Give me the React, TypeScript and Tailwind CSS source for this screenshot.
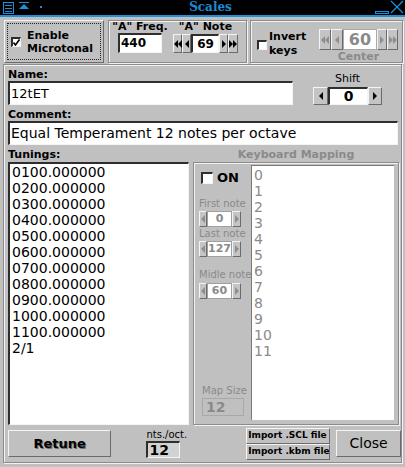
import React from 'react';

const raised = 'border border-t-[#f4f4f4] border-l-[#f4f4f4] border-b-[#6b6b6b] border-r-[#6b6b6b]';
const sunken =
  'border-t-2 border-l-2 border-b border-r border-t-[#2e2e2e] border-l-[#2e2e2e] border-b-[#f4f4f4] border-r-[#f4f4f4]';
const groove = 'border border-[#8b8b8b] shadow-[inset_1px_1px_0_#f2f2f2,1px_1px_0_#f2f2f2]';
const dimText = 'text-[#8a8a8a]';

function Tri({ left, color }: { left: boolean; color: string }) {
  return (
    <svg width="4" height="8" viewBox="0 0 4 8" className="shrink-0">
      <path d={left ? 'M4 0L0 4L4 8Z' : 'M0 0L4 4L0 8Z'} fill={color} />
    </svg>
  );
}

function Arrow({
  left = false,
  double = false,
  dim = false,
  className = '',
}: {
  left?: boolean;
  double?: boolean;
  dim?: boolean;
  className?: string;
}) {
  const c = dim ? '#8e8e8e' : '#000';
  return (
    <div className={`flex items-center justify-center bg-[#c4c4c4] ${raised} ${className}`}>
      {double && left && <Tri left color={c} />}
      <Tri left={left} color={c} />
      {double && !left && <Tri left={false} color={c} />}
    </div>
  );
}

function Check({ on = false, box }: { on?: boolean; box: string }) {
  return (
    <div className={`bg-white ${sunken} ${box} flex items-center justify-center shrink-0`}>
      {on && (
        <svg width="7" height="7" viewBox="0 0 7 7">
          <path d="M0.5 3.5L2.5 6L6.5 0.5" stroke="#000" strokeWidth="1.6" fill="none" />
        </svg>
      )}
    </div>
  );
}

function SmallCounter({ value }: { value: string }) {
  return (
    <div className="flex h-[16px] ml-[5px]">
      <Arrow left dim className="w-[8px]" />
      <div
        className={`w-[25px] bg-white border border-[#a0a0a0] flex items-center justify-center text-[11px] font-bold ${dimText}`}
      >
        {value}
      </div>
      <Arrow dim className="w-[9px]" />
    </div>
  );
}

function TitleBar() {
  const blue = '#1e8fdc';
  return (
    <div className="flex h-[17px] bg-black border-b-2 border-[#1e8fdc]">
      <svg width="48" height="15" className="shrink-0">
        <rect x="3.5" y="2.5" width="10" height="11" fill="none" stroke={blue} />
        <line x1="5" y1="5.5" x2="12" y2="5.5" stroke={blue} />
        <line x1="5" y1="8.5" x2="12" y2="8.5" stroke={blue} />
        <line x1="5" y1="11.5" x2="12" y2="11.5" stroke={blue} />
        <rect x="19" y="2" width="10" height="1" fill={blue} />
        <path d="M19 9L24 4L29 9Z" fill={blue} />
        <rect x="40" y="6" width="2" height="2" fill={blue} />
      </svg>
      <div className="flex-1 text-center font-['DejaVu_Serif',serif] font-bold text-[12px] leading-[15px] text-[#1a8ad4]">
        Scales
      </div>
      <svg width="32" height="15" className="shrink-0">
        <rect x="2.5" y="11.5" width="13" height="2" fill="none" stroke={blue} />
        <line x1="18" y1="1" x2="30" y2="13" stroke={blue} strokeWidth="1.2" />
        <line x1="30" y1="1" x2="18" y2="13" stroke={blue} strokeWidth="1.2" />
      </svg>
    </div>
  );
}

export default function App() {
  const tunings = [
    '0100.000000',
    '0200.000000',
    '0300.000000',
    '0400.000000',
    '0500.000000',
    '0600.000000',
    '0700.000000',
    '0800.000000',
    '0900.000000',
    '1000.000000',
    '1100.000000',
    '2/1',
  ];
  const keys = Array.from({ length: 12 }, (_, i) => String(i));

  return (
    <div className="w-[405px] h-[467px] overflow-hidden bg-[#c0c0c0] text-black font-['DejaVu_Sans',sans-serif]">
      <TitleBar />

      {/* top controls */}
      <div className="flex items-start h-[47px] pt-[3px]">
        <div className={`ml-[4px] w-[100px] h-[43px] p-[2px] ${raised}`}>
          <div className="h-full border border-dotted border-[#222] flex items-center pl-[3px] gap-[6px]">
            <Check on box="w-[10px] h-[10px]" />
            <div className="text-[11px] font-bold leading-[13px]">
              Enable
              <br />
              Microtonal
            </div>
          </div>
        </div>

        <div className={`ml-[4px] w-[139px] h-[43px] ${groove} flex pl-[9px] gap-[11px]`}>
          <div className="w-[44px] flex flex-col items-center">
            <div className="text-[11px] font-bold leading-[12px] whitespace-nowrap">"A" Freq.</div>
            <div className={`w-[44px] h-[20px] bg-white ${sunken} text-[12px] font-bold leading-[17px] pl-[1px]`}>
              440
            </div>
          </div>
          <div className="w-[65px] flex flex-col items-center">
            <div className="text-[11px] font-bold leading-[12px] whitespace-nowrap">"A" Note</div>
            <div className="flex h-[19px] mt-[1px]">
              <Arrow left double className="w-[9px]" />
              <Arrow left className="w-[9px]" />
              <div className={`w-[28px] bg-white ${sunken} flex items-center justify-center text-[12px] font-bold`}>
                69
              </div>
              <Arrow className="w-[9px]" />
              <Arrow double className="w-[10px]" />
            </div>
          </div>
        </div>

        <div className={`ml-[3px] w-[153px] h-[43px] ${groove} flex items-start`}>
          <div className="mt-[19px] ml-[6px]">
            <Check box="w-[10px] h-[10px]" />
          </div>
          <div className="ml-[2px] mt-[9px] text-[11px] font-bold leading-[14px]">
            Invert
            <br />
            keys
          </div>
          <div className="ml-auto mr-[4px] mt-[8px] flex flex-col items-center">
            <div className="flex h-[21px]">
              <Arrow left double dim className="w-[12px]" />
              <Arrow left dim className="w-[12px]" />
              <div
                className={`w-[34px] bg-white border border-[#a8a8a8] flex items-center justify-center text-[16px] font-bold ${dimText}`}
              >
                60
              </div>
              <Arrow dim className="w-[10px]" />
              <Arrow double dim className="w-[11px]" />
            </div>
            <div className={`mt-[1px] text-[11px] font-bold leading-[12px] ${dimText}`}>Center</div>
          </div>
        </div>
      </div>

      {/* main panel */}
      <div className={`mx-[3px] h-[399px] ${groove} pl-[4px] pt-[3px]`}>
        <div className="flex">
          <div className="w-[285px]">
            <div className="text-[11px] font-bold leading-[13px]">Name:</div>
            <div className={`h-[24px] bg-white ${sunken} text-[13px] leading-[21px] pl-[1px]`}>12tET</div>
          </div>
          <div className="ml-[20px] pt-[4px] flex flex-col items-center">
            <div className="text-[11px] leading-[14px]">Shift</div>
            <div className="flex h-[18px] mt-[1px]">
              <Arrow left className="w-[15px]" />
              <div className={`w-[40px] bg-white ${sunken} flex items-center justify-center text-[14px] font-bold`}>
                0
              </div>
              <Arrow className="w-[14px]" />
            </div>
          </div>
        </div>

        <div className="mt-[3px] text-[11px] font-bold leading-[13px]">Comment:</div>
        <div className={`w-[390px] h-[24px] bg-white ${sunken} text-[14px] leading-[21px] pl-[1px] whitespace-nowrap`}>
          Equal Temperament 12 notes per octave
        </div>

        <div className="mt-[3px] flex h-[14px] text-[11px] font-bold leading-[14px]">
          <div className="w-[185px]">Tunings:</div>
          <div className={`w-[206px] text-center ${dimText}`}>Keyboard Mapping</div>
        </div>

        <div className="flex h-[263px] gap-[4px]">
          <div className={`w-[181px] bg-white ${sunken} pl-[2px] text-[14px] leading-[16px]`}>
            {tunings.map((t) => (
              <div key={t}>{t}</div>
            ))}
          </div>

          <div className={`w-[206px] ${groove} flex`}>
            <div className="w-[57px] flex flex-col">
              <div className="mt-[8px] ml-[7px] flex items-center gap-[4px]">
                <Check box="w-[12px] h-[12px]" />
                <span className="text-[13px] font-bold leading-[13px]">ON</span>
              </div>
              <div className={`mt-[14px] ml-[5px] text-[10px] leading-[12px] whitespace-nowrap ${dimText}`}>
                First note
              </div>
              <div className="mt-[1px]">
                <SmallCounter value="0" />
              </div>
              <div className={`mt-[1px] ml-[5px] text-[10px] leading-[12px] whitespace-nowrap ${dimText}`}>
                Last note
              </div>
              <div className="mt-[1px]">
                <SmallCounter value="127" />
              </div>
              <div className={`mt-[12px] ml-[5px] text-[10px] leading-[12px] whitespace-nowrap ${dimText}`}>
                Midle note
              </div>
              <div className="mt-[2px]">
                <SmallCounter value="60" />
              </div>
              <div className={`mt-[86px] ml-[8px] text-[10px] leading-[12px] whitespace-nowrap ${dimText}`}>
                Map Size
              </div>
              <div
                className={`mt-[1px] ml-[8px] w-[42px] h-[18px] border border-[#a8a8a8] text-[14px] font-bold leading-[16px] pl-[3px] ${dimText}`}
              >
                12
              </div>
            </div>
            <div
              className={`w-[143px] mt-[2px] mb-[4px] bg-white border-l border-t border-[#7a7a7a] pl-[2px] pt-[1px] text-[14px] leading-[16px] ${dimText}`}
            >
              {keys.map((k) => (
                <div key={k}>{k}</div>
              ))}
            </div>
          </div>
        </div>

        {/* bottom buttons */}
        <div className="flex items-start">
          <div
            className={`mt-[5px] w-[107px] h-[27px] ${raised} flex items-center justify-center text-[13px] font-bold [text-shadow:1px_1px_0_#6e6e6e]`}
          >
            Retune
          </div>
          <div className="ml-[35px] mt-[4px] flex flex-col">
            <div className="text-[10px] leading-[12px]">nts./oct.</div>
            <div className={`w-[34px] h-[17px] bg-[#d2d2d2] ${sunken} text-[14px] font-bold leading-[14px] pl-[1px]`}>
              12
            </div>
          </div>
          <div className="ml-[59px] mt-[3px] flex flex-col">
            <div
              className={`w-[84px] h-[16px] ${raised} flex items-center pl-[1px] overflow-hidden whitespace-nowrap text-[9px] font-bold`}
            >
              Import .SCL file
            </div>
            <div
              className={`w-[84px] h-[16px] ${raised} flex items-center pl-[1px] overflow-hidden whitespace-nowrap text-[9px] font-bold`}
            >
              Import .kbm file
            </div>
          </div>
          <div
            className={`ml-[6px] mt-[5px] w-[67px] h-[27px] ${raised} flex items-center justify-center text-[14px]`}
          >
            Close
          </div>
        </div>
      </div>
    </div>
  );
}
